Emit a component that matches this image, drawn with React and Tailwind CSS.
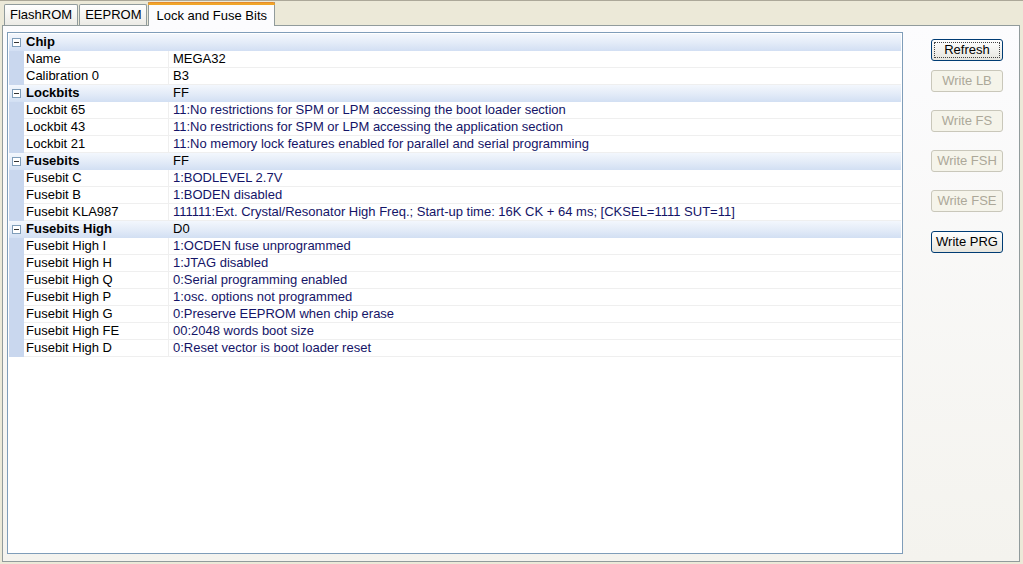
import React from 'react';

const rows = [
    { cat: 'Chip', value: '' },
    { name: 'Name', value: 'MEGA32' },
    { name: 'Calibration 0', value: 'B3' },
    { cat: 'Lockbits', value: 'FF' },
    { name: 'Lockbit 65', value: '11:No restrictions for SPM or LPM accessing the boot loader section', bits: true },
    { name: 'Lockbit 43', value: '11:No restrictions for SPM or LPM accessing the application section', bits: true },
    { name: 'Lockbit 21', value: '11:No memory lock features enabled for parallel and serial programming', bits: true },
    { cat: 'Fusebits', value: 'FF' },
    { name: 'Fusebit C', value: '1:BODLEVEL 2.7V', bits: true },
    { name: 'Fusebit B', value: '1:BODEN disabled', bits: true },
    { name: 'Fusebit KLA987', value: '111111:Ext. Crystal/Resonator High Freq.; Start-up time: 16K CK + 64 ms; [CKSEL=1111 SUT=11]', bits: true },
    { cat: 'Fusebits High', value: 'D0' },
    { name: 'Fusebit High I', value: '1:OCDEN fuse unprogrammed', bits: true },
    { name: 'Fusebit High H', value: '1:JTAG disabled', bits: true },
    { name: 'Fusebit High Q', value: '0:Serial programming enabled', bits: true },
    { name: 'Fusebit High P', value: '1:osc. options not programmed', bits: true },
    { name: 'Fusebit High G', value: '0:Preserve EEPROM when chip erase', bits: true },
    { name: 'Fusebit High FE', value: '00:2048 words boot size', bits: true },
    { name: 'Fusebit High D', value: '0:Reset vector is boot loader reset', bits: true },
];

const buttons = [
    { label: 'Refresh', state: 'focus', mt: 'mt-[13px]' },
    { label: 'Write LB', state: 'disabled', mt: 'mt-[9px]' },
    { label: 'Write FS', state: 'disabled', mt: 'mt-[18px]' },
    { label: 'Write FSH', state: 'disabled', mt: 'mt-[18px]' },
    { label: 'Write FSE', state: 'disabled', mt: 'mt-[18px]' },
    { label: 'Write PRG', state: 'normal', mt: 'mt-[19px]' },
];

function Minus() {
    return (
        <span className="w-[9px] h-[9px] border border-[#7F9DB9] bg-white flex items-center justify-center">
            <span className="w-[5px] h-px bg-[#333]" />
        </span>
    );
}

function Tab({ label, active }) {
    if (active) {
        return (
            <div className="h-[24px] px-[7px] -mb-px border-x border-[#919B9C] bg-[#FCFCFE] relative z-10 flex flex-col">
                <div className="h-[3px] -mx-[8px] bg-[#F0A52A] rounded-t-[2px] border-t border-[#E68B2C]" />
                <span className="pt-[1px]">{label}</span>
            </div>
        );
    }
    return (
        <div className="h-[21px] px-[5px] border border-b-0 border-[#919B9C] rounded-t-[2px] bg-gradient-to-b from-white to-[#ECEBE6] flex items-center">
            {label}
        </div>
    );
}

export default function App() {
    return (
        <div
            className="w-[1023px] h-[564px] bg-[#ECE9D8] text-[13px] text-black flex flex-col overflow-hidden"
            style={{ fontFamily: '"Liberation Sans", Arial, sans-serif' }}
        >
            {/* tab strip */}
            <div className="h-[25px] flex items-end pl-[4px] gap-px border-t border-[#ACA899]">
                <Tab label="FlashROM" />
                <Tab label="EEPROM" />
                <Tab label="Lock and Fuse Bits" active />
            </div>

            {/* tab page */}
            <div className="ml-[2px] mr-[3px] mb-[2px] flex-1 border border-[#919B9C] bg-gradient-to-b from-[#FCFCFE] to-[#F4F3EE] flex">
                {/* property grid */}
                <div className="ml-[4px] mt-[6px] mb-[7px] w-[896px] border border-[#7F9DB9] bg-white p-px">
                    {rows.map((r, i) =>
                        r.cat ? (
                            <div key={i} className="h-[17px] flex bg-gradient-to-b from-[#F3F7FD] via-[#E4ECF8] to-[#D2DFF3]">
                                <div className="w-[15px] flex items-center justify-center">
                                    <Minus />
                                </div>
                                <div className="w-[145px] pl-[2px] font-bold leading-[16px]">{r.cat}</div>
                                <div className="pl-[4px] leading-[16px]">{r.value}</div>
                            </div>
                        ) : (
                            <div key={i} className="h-[17px] flex">
                                <div className="w-[15px] bg-[#C9D7EE]" />
                                <div className="flex-1 flex border-b border-[#EFEFEF]">
                                    <div className="w-[145px] pl-[2px] leading-[16px] border-r border-[#EFEFEF]">{r.name}</div>
                                    <div className={`pl-[4px] leading-[16px] whitespace-nowrap ${r.bits ? 'text-[#141467]' : ''}`}>
                                        {r.value}
                                    </div>
                                </div>
                            </div>
                        )
                    )}
                </div>

                {/* buttons */}
                <div className="ml-[28px] flex flex-col">
                    {buttons.map(b => (
                        <button
                            key={b.label}
                            type="button"
                            className={`${b.mt} w-[72px] h-[22px] rounded-[3px] flex items-center justify-center ${
                                b.state === 'disabled'
                                    ? 'border border-[#C9C7BA] bg-[#F5F4EA] text-[#ACA899]'
                                    : 'border border-[#003C74] bg-gradient-to-b from-white to-[#E6E5DE] text-black'
                            }`}
                        >
                            {b.state === 'focus' ? (
                                <span className="w-[66px] h-[16px] border border-dotted border-[#444] flex items-center justify-center">
                                    {b.label}
                                </span>
                            ) : (
                                b.label
                            )}
                        </button>
                    ))}
                </div>
            </div>
        </div>
    );
}
